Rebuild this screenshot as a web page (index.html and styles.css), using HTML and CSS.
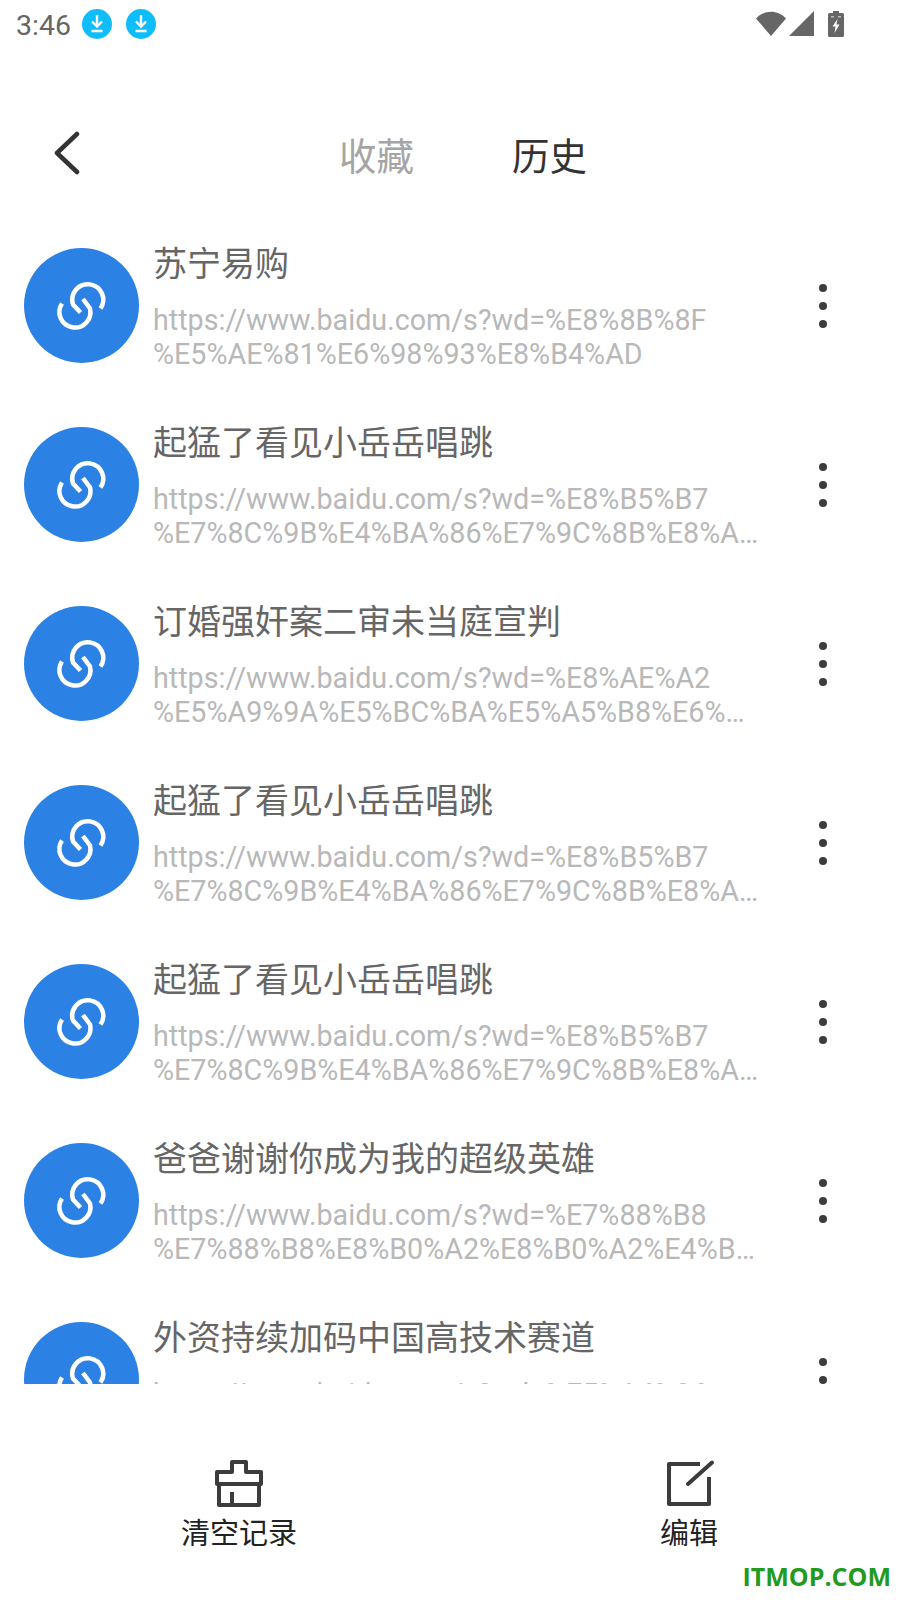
FILE: index.html
```html
<!DOCTYPE html>
<html lang="zh-CN">
<head>
    <meta charset="UTF-8">
    <meta name="viewport" content="width=device-width, initial-scale=1.0">
    <title>历史</title>
    <link rel="stylesheet" href="styles.css">
</head>
<body>
    <svg class="sprites" width="0" height="0">
        <symbol id="link" viewBox="0 0 70 70">
            <path d="M53.500 37.500A15.500 15.500 0 1 0 26 33.500L33.500 41.500"/>
            <path d="M15 32.500A15.500 15.500 0 1 0 43 37.500L36 28"/>
        </symbol>
    </svg>

    <div class="status-bar">
        <span class="time">3:46</span>
        <svg class="dl" viewBox="0 0 30 30"><circle cx="15" cy="15" r="15" fill="#10bdfb"/><path d="M15 6v11M10 12.500l5 5 5-5M9.500 22h11" fill="none" stroke="#fff" stroke-width="2.400"/></svg>
        <svg class="dl" viewBox="0 0 30 30"><circle cx="15" cy="15" r="15" fill="#10bdfb"/><path d="M15 6v11M10 12.500l5 5 5-5M9.500 22h11" fill="none" stroke="#fff" stroke-width="2.400"/></svg>
        <div class="status-right">
            <svg class="wifi" viewBox="0 0 30 26"><path d="M0 7.500C8 -1.500 22 -1.500 30 7.500L15 25z" fill="#666"/></svg>
            <svg class="signal" viewBox="0 0 25 25"><path d="M25 0V25H0z" fill="#666"/></svg>
            <svg class="battery" viewBox="0 0 16 26"><path d="M5 0h6v2h3.500q1.500 0 1.500 1.500V24.500q0 1.500-1.500 1.500H1.500Q0 26 0 24.500V3.500Q0 2 1.500 2H5z" fill="#666"/><path d="M9.500 8L4.500 15.500H7.500L6.500 22L11.500 13.500H8.500z" fill="#fff"/><path d="M3 5h3v1.500H3zM10 5h3v1.500h-3z" fill="#bbb"/></svg>
        </div>
    </div>

    <div class="header">
        <svg class="back" viewBox="0 0 26 44"><path d="M23 3L3 22l20 19" fill="none" stroke="#333" stroke-width="4.500" stroke-linecap="round" stroke-linejoin="round"/></svg>
        <div class="tabs">
            <span class="tab">收藏</span>
            <span class="tab active">历史</span>
        </div>
    </div>

    <div class="list">
        <div class="row">
            <div class="avatar"><svg class="link-icon" viewBox="0 0 70 70"><use href="#link"/></svg></div>
            <div class="info">
                <div class="name">苏宁易购</div>
                <div class="url">https://www.baidu.com/s?wd=%E8%8B%8F</div>
                <div class="url">%E5%AE%81%E6%98%93%E8%B4%AD</div>
            </div>
            <div class="more"><i></i><i></i><i></i></div>
        </div>
        <div class="row">
            <div class="avatar"><svg class="link-icon" viewBox="0 0 70 70"><use href="#link"/></svg></div>
            <div class="info">
                <div class="name">起猛了看见小岳岳唱跳</div>
                <div class="url">https://www.baidu.com/s?wd=%E8%B5%B7</div>
                <div class="url">%E7%8C%9B%E4%BA%86%E7%9C%8B%E8%A7%81%E5%B0%8F%E5%B2%B3%E5%B2%B3</div>
            </div>
            <div class="more"><i></i><i></i><i></i></div>
        </div>
        <div class="row">
            <div class="avatar"><svg class="link-icon" viewBox="0 0 70 70"><use href="#link"/></svg></div>
            <div class="info">
                <div class="name">订婚强奸案二审未当庭宣判</div>
                <div class="url">https://www.baidu.com/s?wd=%E8%AE%A2</div>
                <div class="url">%E5%A9%9A%E5%BC%BA%E5%A5%B8%E6%A1%88%E4%BA%8C%E5%AE%A1%E6%9C%AA</div>
            </div>
            <div class="more"><i></i><i></i><i></i></div>
        </div>
        <div class="row">
            <div class="avatar"><svg class="link-icon" viewBox="0 0 70 70"><use href="#link"/></svg></div>
            <div class="info">
                <div class="name">起猛了看见小岳岳唱跳</div>
                <div class="url">https://www.baidu.com/s?wd=%E8%B5%B7</div>
                <div class="url">%E7%8C%9B%E4%BA%86%E7%9C%8B%E8%A7%81%E5%B0%8F%E5%B2%B3%E5%B2%B3</div>
            </div>
            <div class="more"><i></i><i></i><i></i></div>
        </div>
        <div class="row">
            <div class="avatar"><svg class="link-icon" viewBox="0 0 70 70"><use href="#link"/></svg></div>
            <div class="info">
                <div class="name">起猛了看见小岳岳唱跳</div>
                <div class="url">https://www.baidu.com/s?wd=%E8%B5%B7</div>
                <div class="url">%E7%8C%9B%E4%BA%86%E7%9C%8B%E8%A7%81%E5%B0%8F%E5%B2%B3%E5%B2%B3</div>
            </div>
            <div class="more"><i></i><i></i><i></i></div>
        </div>
        <div class="row">
            <div class="avatar"><svg class="link-icon" viewBox="0 0 70 70"><use href="#link"/></svg></div>
            <div class="info">
                <div class="name">爸爸谢谢你成为我的超级英雄</div>
                <div class="url">https://www.baidu.com/s?wd=%E7%88%B8</div>
                <div class="url">%E7%88%B8%E8%B0%A2%E8%B0%A2%E4%BD%A0%E6%88%90%E4%B8%BA%E6%88%91</div>
            </div>
            <div class="more"><i></i><i></i><i></i></div>
        </div>
        <div class="row">
            <div class="avatar"><svg class="link-icon" viewBox="0 0 70 70"><use href="#link"/></svg></div>
            <div class="info">
                <div class="name">外资持续加码中国高技术赛道</div>
                <div class="url">https://www.baidu.com/s?wd=%E5%A4%96</div>
            </div>
            <div class="more"><i></i><i></i><i></i></div>
        </div>
    </div>

    <div class="toolbar">
        <div class="tool">
            <svg class="tool-icon" viewBox="0 0 50 50"><path d="M3 13H18V3H32V13H47V25H3zM5 25H45V46H5zM18 33V46" fill="none" stroke="#3c3c3c" stroke-width="4" stroke-linejoin="round"/></svg>
            <span class="tool-label">清空记录</span>
        </div>
        <div class="tool">
            <svg class="tool-icon" viewBox="0 0 50 50"><path d="M36 5H5V45H45V18" fill="none" stroke="#3c3c3c" stroke-width="4" stroke-linejoin="round"/><path d="M24 25L48 3.500" fill="none" stroke="#3c3c3c" stroke-width="4" stroke-linecap="round"/></svg>
            <span class="tool-label">编辑</span>
        </div>
    </div>

    <div class="watermark">ITMOP.COM</div>
</body>
</html>
```

FILE: styles.css
```css
* {
    box-sizing: border-box;
}

body {
    margin: 0;
    width: 900px;
    height: 1600px;
    background: #fff;
    position: relative;
    overflow: hidden;
    font-family: "Roboto", "Noto Sans CJK SC", sans-serif;
}

.sprites {
    position: absolute;
}

/* status bar */
.status-bar {
    height: 50px;
    display: flex;
    align-items: center;
    padding-left: 16px;
}

.time {
    font-size: 28.500px;
    color: #666;
    width: 66px;
}

.dl {
    width: 30px;
    height: 30px;
    margin-right: 14px;
    margin-bottom: 2px;
}

.status-right {
    margin-left: auto;
    margin-right: 56px;
    margin-bottom: 3px;
    display: flex;
    align-items: center;
    gap: 3px;
}

.wifi {
    width: 30px;
    height: 26px;
}

.signal {
    width: 25px;
    height: 25px;
    margin-right: 11px;
}

.battery {
    width: 16px;
    height: 26px;
}

/* header */
.header {
    height: 148px;
    display: flex;
    align-items: center;
    padding: 66px 0 0 54px;
}

.back {
    width: 26px;
    height: 44px;
    margin-top: -8px;
}

.tabs {
    margin-left: 259px;
    display: flex;
    gap: 98px;
}

.tab {
    font-size: 37.500px;
    color: #a5a5a5;
    line-height: 50px;
}

.tab.active {
    color: #333;
}

/* list */
.list {
    height: 1186px;
    overflow: hidden;
    padding-top: 50px;
}

.row {
    height: 115px;
    margin-bottom: 64px;
    display: flex;
    padding-left: 24px;
}

.avatar {
    width: 115px;
    height: 115px;
    border-radius: 50%;
    background: #2b82e4;
    flex: none;
    display: flex;
    align-items: center;
    justify-content: center;
}

.link-icon {
    width: 70px;
    height: 70px;
    fill: none;
    stroke: #fff;
    stroke-width: 4.500;
}

.info {
    width: 608px;
    margin-left: 14px;
    flex: none;
}

.name {
    font-size: 34px;
    line-height: 40px;
    color: #666;
    margin-top: -4px;
    margin-bottom: 19px;
    white-space: nowrap;
}

.url {
    font-size: 28.700px;
    line-height: 34px;
    color: #b8b8b8;
    white-space: nowrap;
    overflow: hidden;
    text-overflow: ellipsis;
}

.more {
    margin-left: 57px;
    width: 10px;
    height: 115px;
    display: flex;
    flex-direction: column;
    align-items: center;
    justify-content: center;
    gap: 10px;
}

.more i {
    width: 8px;
    height: 8px;
    border-radius: 50%;
    background: #3c3c3c;
}

/* bottom bar */
.toolbar {
    height: 216px;
    display: flex;
    gap: 330px;
    padding: 75px 0 0 179px;
}

.tool {
    width: 120px;
    display: flex;
    flex-direction: column;
    align-items: center;
}

.tool-icon {
    width: 50px;
    height: 50px;
}

.tool-label {
    font-size: 29px;
    line-height: 36px;
    margin-top: 7px;
    color: #222;
}

.watermark {
    position: absolute;
    right: 9px;
    bottom: 7px;
    font-family: "Open Sans", sans-serif;
    font-weight: 700;
    font-size: 25px;
    color: #229a1e;
}
```
